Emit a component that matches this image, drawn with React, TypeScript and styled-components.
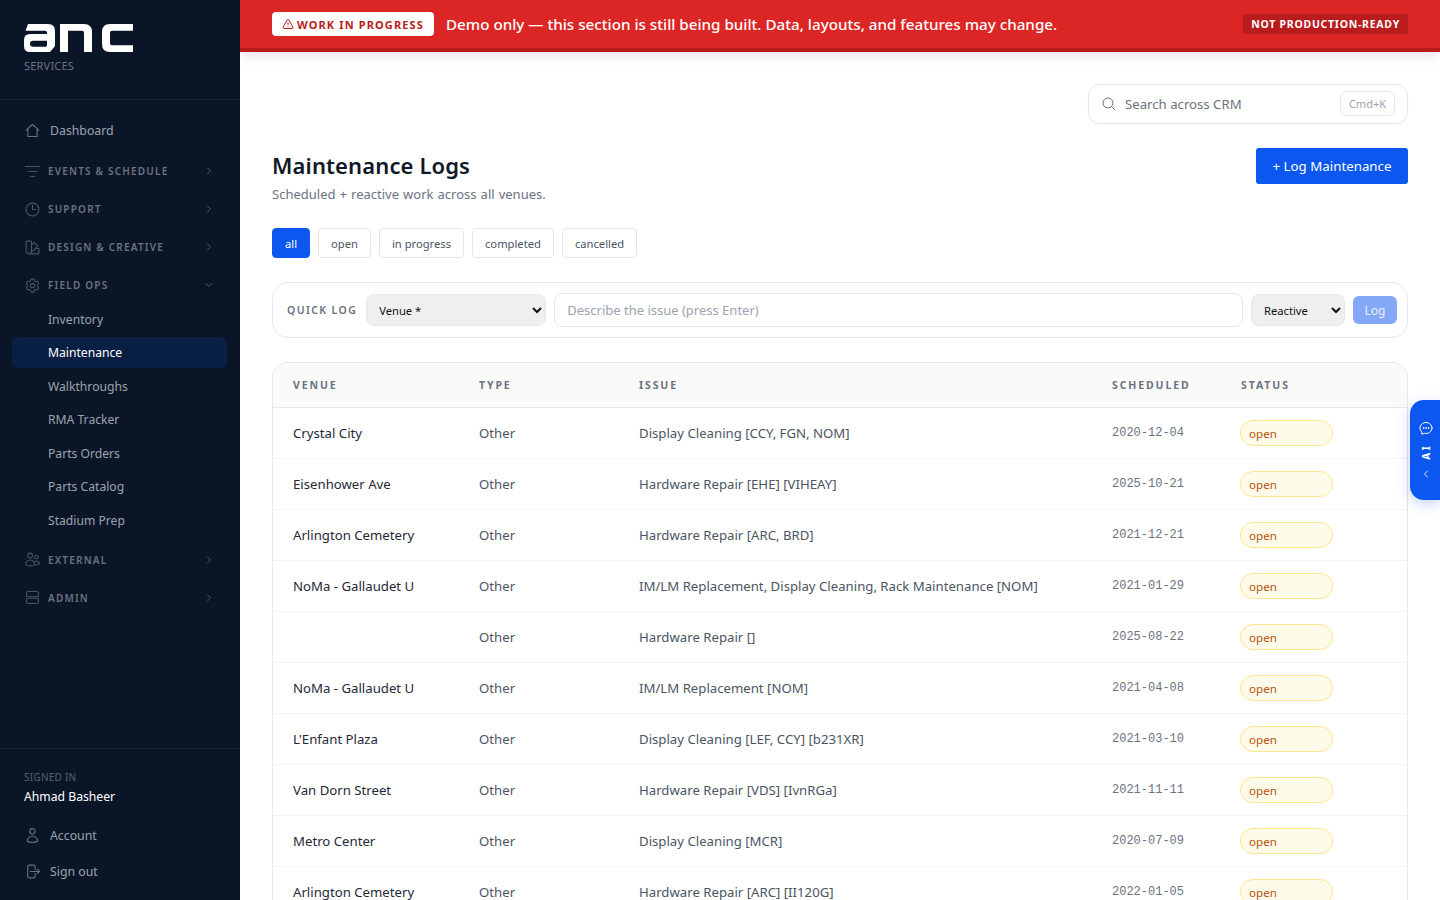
import React from 'react';
import styled, { createGlobalStyle } from 'styled-components';
import { ListFilter, ChevronRight, ChevronDown, ChevronLeft, TriangleAlert } from 'lucide-react';
import { HiOutlineClock, HiOutlineSwatch, HiOutlineCog6Tooth, HiOutlineUsers, HiOutlineUser, HiOutlineArrowRightOnRectangle, HiOutlineMagnifyingGlass, HiOutlineChatBubbleOvalLeftEllipsis } from 'react-icons/hi2';

const Global = createGlobalStyle`
  html, body { margin: 0; padding: 0; height: 100%; overflow: hidden; background: #fff; }
  body { font-family: "Noto Sans", "Open Sans", sans-serif; color: #111827; }
  * { box-sizing: border-box; }
`;

const Shell = styled.div`display: flex; height: 100vh; overflow: hidden; position: relative;`;

const Sidebar = styled.aside`
  width: 240px; flex: none; background: #0a1628; display: flex; flex-direction: column; height: 100%;
`;
const Brand = styled.div`
  height: 100px; padding: 24px 24px 0; border-bottom: 1px solid #15233a;
  display: flex; flex-direction: column; align-items: flex-start;
`;
const BrandSub = styled.div`font-size: 11px; line-height: 14px; color: #6b7280; margin-top: 7px; letter-spacing: .2px;`;
const Nav = styled.nav`flex: 1; padding: 13px 13px 0 12px; display: flex; flex-direction: column;`;
const NavLink = styled.div`
  height: 34px; display: flex; align-items: center; gap: 9px; padding: 0 12px; font-size: 12.3px; color: #9ca3af;
  svg { color: #6b7280; flex: none; }
`;
const GroupHead = styled.div<{ $first?: boolean }>`
  height: 38px; display: flex; align-items: center; padding: 0 12px; gap: 7px; margin-top: ${p => (p.$first ? '5px' : '0')};
  color: #6b7280; font-size: 10px; font-weight: 600; letter-spacing: 1.2px;
  svg { color: #4b5563; flex: none; }
`;
const GroupLabel = styled.span`flex: 1;`;
const Caret = styled.span`display: flex; svg { color: #6b7280; }`;
const SubList = styled.div`display: flex; flex-direction: column; margin-top: -1px; margin-bottom: 3px;`;
const SubItem = styled.div<{ $active?: boolean }>`
  height: 31px; margin-bottom: 2.5px; padding: 1px 0 0 36px; display: flex; align-items: center; font-size: 12.15px; border-radius: 6px;
  color: ${p => (p.$active ? '#fff' : '#9ca3af')};
  background: ${p => (p.$active ? '#0a1f44' : 'transparent')};
`;
const SideFoot = styled.div`border-top: 1px solid #15233a; padding: 21px 12px 11px; height: 152px;`;
const SignedIn = styled.div`font-size: 10px; line-height: 14px; color: #556070; padding-left: 12px; letter-spacing: .25px;`;
const UserName = styled.div`font-size: 12.2px; line-height: 18px; color: #fff; padding-left: 12px; margin-top: 4px; margin-bottom: 11px;`;
const FootLink = styled(NavLink)`height: 36px;`;

const Main = styled.main`flex: 1; min-width: 0; display: flex; flex-direction: column; overflow: hidden;`;
const Banner = styled.div`
  height: 52px; flex: none; background: #dc2626; border-bottom: 4px solid #b91c1c;
  display: flex; align-items: center; padding: 0 32px; box-shadow: 0 4px 12px rgba(0,0,0,.1);
`;
const WipTag = styled.span`
  height: 24px; background: #fff; color: #b91c1c; border-radius: 4px; padding: 0 10px; display: inline-flex; align-items: center; gap: 3px;
  font-size: 11px; font-weight: 700; letter-spacing: 1.13px; margin-right: 12px;
`;
const BannerText = styled.span`font-size: 15.2px; font-weight: 500; color: #fff; flex: 1;`;
const ProdTag = styled.span`
  height: 20px; background: #b91c1c; color: #fff; border-radius: 3px; padding: 0 8px; display: inline-flex; align-items: center;
  font-size: 10.5px; font-weight: 700; letter-spacing: .74px;
`;
const Content = styled.div`flex: 1; padding: 32px 32px 0; overflow: hidden;`;
const SearchRow = styled.div`display: flex; justify-content: flex-end; margin-bottom: 24px;`;
const SearchBox = styled.div`
  width: 320px; height: 40px; border: 1px solid #e5e7eb; border-radius: 12px; display: flex; align-items: center; padding: 0 12px 1px 12px; gap: 8px;
  box-shadow: 0 1px 2px rgba(0,0,0,.04); svg { color: #6b7280; }
`;
const SearchText = styled.span`flex: 1; font-size: 13.2px; color: #6b7280;`;
const Kbd = styled.span`
  height: 25px; padding: 0 8px; border: 1px solid #e5e7eb; border-radius: 7px; font-size: 11px; color: #9ca3af; display: inline-flex; align-items: center;
`;
const TitleRow = styled.div`display: flex; justify-content: space-between; align-items: flex-start; margin-bottom: 25px;`;
const Title = styled.h1`margin: -1px 0 0; font-size: 22px; letter-spacing: .12px; line-height: 36px; font-weight: 600; color: #111827;`;
const Subtitle = styled.p`margin: 2px 0 0; font-size: 13px; word-spacing: .7px; line-height: 18px; color: #6b7280;`;
const PrimaryButton = styled.button`
  height: 36px; width: 152px; border: 0; border-radius: 3px; background: #0b57f0; color: #fff; font: inherit; font-size: 13.3px; padding: 0 0 1px;
`;
const Filters = styled.div`display: flex; gap: 8px; margin-bottom: 24px;`;
const Filter = styled.button<{ $active?: boolean }>`
  height: 30px; padding: 0 12px; border-radius: 4px; font: inherit; font-size: 11.2px;
  border: 1px solid ${p => (p.$active ? '#0b57f0' : '#e5e7eb')};
  background: ${p => (p.$active ? '#0b57f0' : '#fff')};
  color: ${p => (p.$active ? '#fff' : '#4b5563')};
`;
const QuickLog = styled.div`
  height: 56px; border: 1px solid #e5e7eb; border-radius: 16px; display: flex; align-items: center; padding: 0 10px 0 14px; gap: 8px; margin-bottom: 24px;
`;
const QuickLabel = styled.span`font-size: 10.5px; font-weight: 600; letter-spacing: 1.4px; color: #6b7280; margin-right: 1px; white-space: nowrap;`;
const NativeSelect = styled.select<{ $w: number }>`
  width: ${p => p.$w}px; height: 32px; border: 1px solid #e5e7eb; border-radius: 8px; background-color: #efefef; font: inherit; font-size: 11.2px; color: #111; padding: 0 4px 0 8px;
`;
const IssueInput = styled.input`
  flex: 1; height: 34px; border: 1px solid #e5e7eb; border-radius: 8px; font: inherit; font-size: 13px; padding: 0 12px; background: #fff;
  &::placeholder { color: #9ca3af; }
`;
const LogButton = styled.button`
  width: 44px; height: 28px; border: 0; border-radius: 6px; background: #84a8f7; color: #e8eefc; font: inherit; font-size: 12px;
`;
const TableCard = styled.div`border: 1px solid #e5e7eb; border-bottom: 0; border-radius: 16px 16px 0 0; overflow: hidden;`;
const Table = styled.table`width: 100%; border-collapse: collapse; table-layout: fixed;`;
const Th = styled.th<{ $w?: number }>`
  ${p => (p.$w ? `width: ${p.$w}px;` : '')}
  height: 44px; background: #fafafa; border-bottom: 1px solid #e5e7eb; text-align: left; padding: 0 20px;
  font-size: 10.5px; font-weight: 700; letter-spacing: 1.9px; color: #6b7280;
`;
const Td = styled.td`height: 51px; border-bottom: 1px solid #f3f4f6; padding: 0 20px; font-size: 13.2px; color: #4b5563;`;
const VenueCell = styled(Td)`color: #1f2937;`;
const DateCell = styled(Td)`font-family: "Liberation Mono", monospace; font-size: 12px; color: #6b7280;`;
const StatusPill = styled.span`
  display: flex; align-items: center; width: 93px; height: 26px; margin-left: -1px; padding: 1px 0 0 8px; border-radius: 13px; background: #fffbeb; border: 1px solid #fde68a; color: #b45309; font-size: 11.6px;
`;
const AiTab = styled.div`
  position: absolute; right: 0; top: 400px; width: 30px; height: 100px; padding-left: 2px; background: #0b57f0; border-radius: 14px 0 0 14px;
  display: flex; flex-direction: column; align-items: center; justify-content: center; gap: 8px; color: #fff; box-shadow: 0 4px 14px rgba(11,87,240,.25);
`;
const AiText = styled.span`font-size: 10px; font-weight: 700; letter-spacing: 2.4px; writing-mode: vertical-rl; transform: rotate(180deg); line-height: 12px;`;

const rows = [
  ['Crystal City', 'Display Cleaning [CCY, FGN, NOM]', '2020-12-04'],
  ['Eisenhower Ave', 'Hardware Repair [EHE] [VIHEAY]', '2025-10-21'],
  ['Arlington Cemetery', 'Hardware Repair [ARC, BRD]', '2021-12-21'],
  ['NoMa - Gallaudet U', 'IM/LM Replacement, Display Cleaning, Rack Maintenance [NOM]', '2021-01-29'],
  ['', 'Hardware Repair []', '2025-08-22'],
  ['NoMa - Gallaudet U', 'IM/LM Replacement [NOM]', '2021-04-08'],
  ["L'Enfant Plaza", 'Display Cleaning [LEF, CCY] [b231XR]', '2021-03-10'],
  ['Van Dorn Street', 'Hardware Repair [VDS] [IvnRGa]', '2021-11-11'],
  ['Metro Center', 'Display Cleaning [MCR]', '2020-07-09'],
  ['Arlington Cemetery', 'Hardware Repair [ARC] [II120G]', '2022-01-05'],
];

const Logo = () => (
  <svg width="109" height="28" viewBox="0 0 109 28" fill="#fff" aria-label="ANC logo">
    <path fillRule="evenodd" d="M4 0H24Q31 0 31 7V22L26 28H6Q0 28 0 22V16Q0 10 6 10H23V8.500Q23 6.700 21 6.700H1.500Z M9 16.700Q6 16.700 6 19.700Q6 22.700 9 22.700H22L23 21.500V16.700Z" />
    <path d="M36 0H60Q68 0 68 8V28H60V9Q60 6.700 58 6.700H44V28H36Z" />
    <path d="M86 0H109V6.700H88Q86 6.700 86 9V19Q86 21.300 88 21.300H109V28H86Q78 28 78 20V8Q78 0 86 0Z" />
  </svg>
);
const HomeIcon = () => (
  <svg width="17" height="17" viewBox="0 0 24 24" fill="none" stroke="currentColor" strokeWidth="1.5" strokeLinecap="round" strokeLinejoin="round">
    <path d="M3 11.500 12 3.500l9 8M5.500 9.500V20.500h13V9.500" />
  </svg>
);
const StackIcon = () => (
  <svg width="17" height="17" viewBox="0 0 24 24" fill="none" stroke="currentColor" strokeWidth="1.5">
    <rect x="3.500" y="3.500" width="17" height="7.500" rx="2.500" />
    <rect x="3.500" y="13" width="17" height="7.500" rx="2.500" />
  </svg>
);

export default function App() {
  const chev = <Caret><ChevronRight size={12} strokeWidth={1.5} /></Caret>;
  return (
    <Shell>
      <Global />
      <Sidebar>
        <Brand>
          <Logo />
          <BrandSub>SERVICES</BrandSub>
        </Brand>
        <Nav>
          <NavLink><HomeIcon />Dashboard</NavLink>
          <GroupHead $first><ListFilter size={17} strokeWidth={1.4} /><GroupLabel>EVENTS &amp; SCHEDULE</GroupLabel>{chev}</GroupHead>
          <GroupHead><HiOutlineClock size={17} /><GroupLabel>SUPPORT</GroupLabel>{chev}</GroupHead>
          <GroupHead><HiOutlineSwatch size={17} /><GroupLabel>DESIGN &amp; CREATIVE</GroupLabel>{chev}</GroupHead>
          <GroupHead><HiOutlineCog6Tooth size={17} /><GroupLabel>FIELD OPS</GroupLabel><Caret><ChevronDown size={12} strokeWidth={1.5} /></Caret></GroupHead>
          <SubList>
            <SubItem>Inventory</SubItem>
            <SubItem $active>Maintenance</SubItem>
            <SubItem>Walkthroughs</SubItem>
            <SubItem>RMA Tracker</SubItem>
            <SubItem>Parts Orders</SubItem>
            <SubItem>Parts Catalog</SubItem>
            <SubItem>Stadium Prep</SubItem>
          </SubList>
          <GroupHead><HiOutlineUsers size={17} /><GroupLabel>EXTERNAL</GroupLabel>{chev}</GroupHead>
          <GroupHead><StackIcon /><GroupLabel>ADMIN</GroupLabel>{chev}</GroupHead>
        </Nav>
        <SideFoot>
          <SignedIn>SIGNED IN</SignedIn>
          <UserName>Ahmad Basheer</UserName>
          <FootLink><HiOutlineUser size={17} />Account</FootLink>
          <FootLink><HiOutlineArrowRightOnRectangle size={17} />Sign out</FootLink>
        </SideFoot>
      </Sidebar>
      <Main>
        <Banner>
          <WipTag><TriangleAlert size={12} strokeWidth={2} />WORK IN PROGRESS</WipTag>
          <BannerText>Demo only — this section is still being built. Data, layouts, and features may change.</BannerText>
          <ProdTag>NOT PRODUCTION-READY</ProdTag>
        </Banner>
        <Content>
          <SearchRow>
            <SearchBox>
              <HiOutlineMagnifyingGlass size={16} />
              <SearchText>Search across CRM</SearchText>
              <Kbd>Cmd+K</Kbd>
            </SearchBox>
          </SearchRow>
          <TitleRow>
            <div>
              <Title>Maintenance Logs</Title>
              <Subtitle>Scheduled + reactive work across all venues.</Subtitle>
            </div>
            <PrimaryButton>+ Log Maintenance</PrimaryButton>
          </TitleRow>
          <Filters>
            <Filter $active>all</Filter>
            <Filter>open</Filter>
            <Filter>in progress</Filter>
            <Filter>completed</Filter>
            <Filter>cancelled</Filter>
          </Filters>
          <QuickLog>
            <QuickLabel>QUICK LOG</QuickLabel>
            <NativeSelect $w={180}><option>Venue *</option></NativeSelect>
            <IssueInput placeholder="Describe the issue (press Enter)" />
            <NativeSelect $w={94}><option>Reactive</option></NativeSelect>
            <LogButton>Log</LogButton>
          </QuickLog>
          <TableCard>
            <Table>
              <thead>
                <tr>
                  <Th $w={186}>VENUE</Th>
                  <Th $w={160}>TYPE</Th>
                  <Th $w={473}>ISSUE</Th>
                  <Th $w={129}>SCHEDULED</Th>
                  <Th>STATUS</Th>
                </tr>
              </thead>
              <tbody>
                {rows.map((r, i) => (
                  <tr key={i}>
                    <VenueCell>{r[0]}</VenueCell>
                    <Td>Other</Td>
                    <Td>{r[1]}</Td>
                    <DateCell>{r[2]}</DateCell>
                    <Td><StatusPill>open</StatusPill></Td>
                  </tr>
                ))}
              </tbody>
            </Table>
          </TableCard>
        </Content>
      </Main>
      <AiTab>
        <HiOutlineChatBubbleOvalLeftEllipsis size={16} />
        <AiText>AI</AiText>
        <ChevronLeft size={12} strokeWidth={1.75} />
      </AiTab>
    </Shell>
  );
}
